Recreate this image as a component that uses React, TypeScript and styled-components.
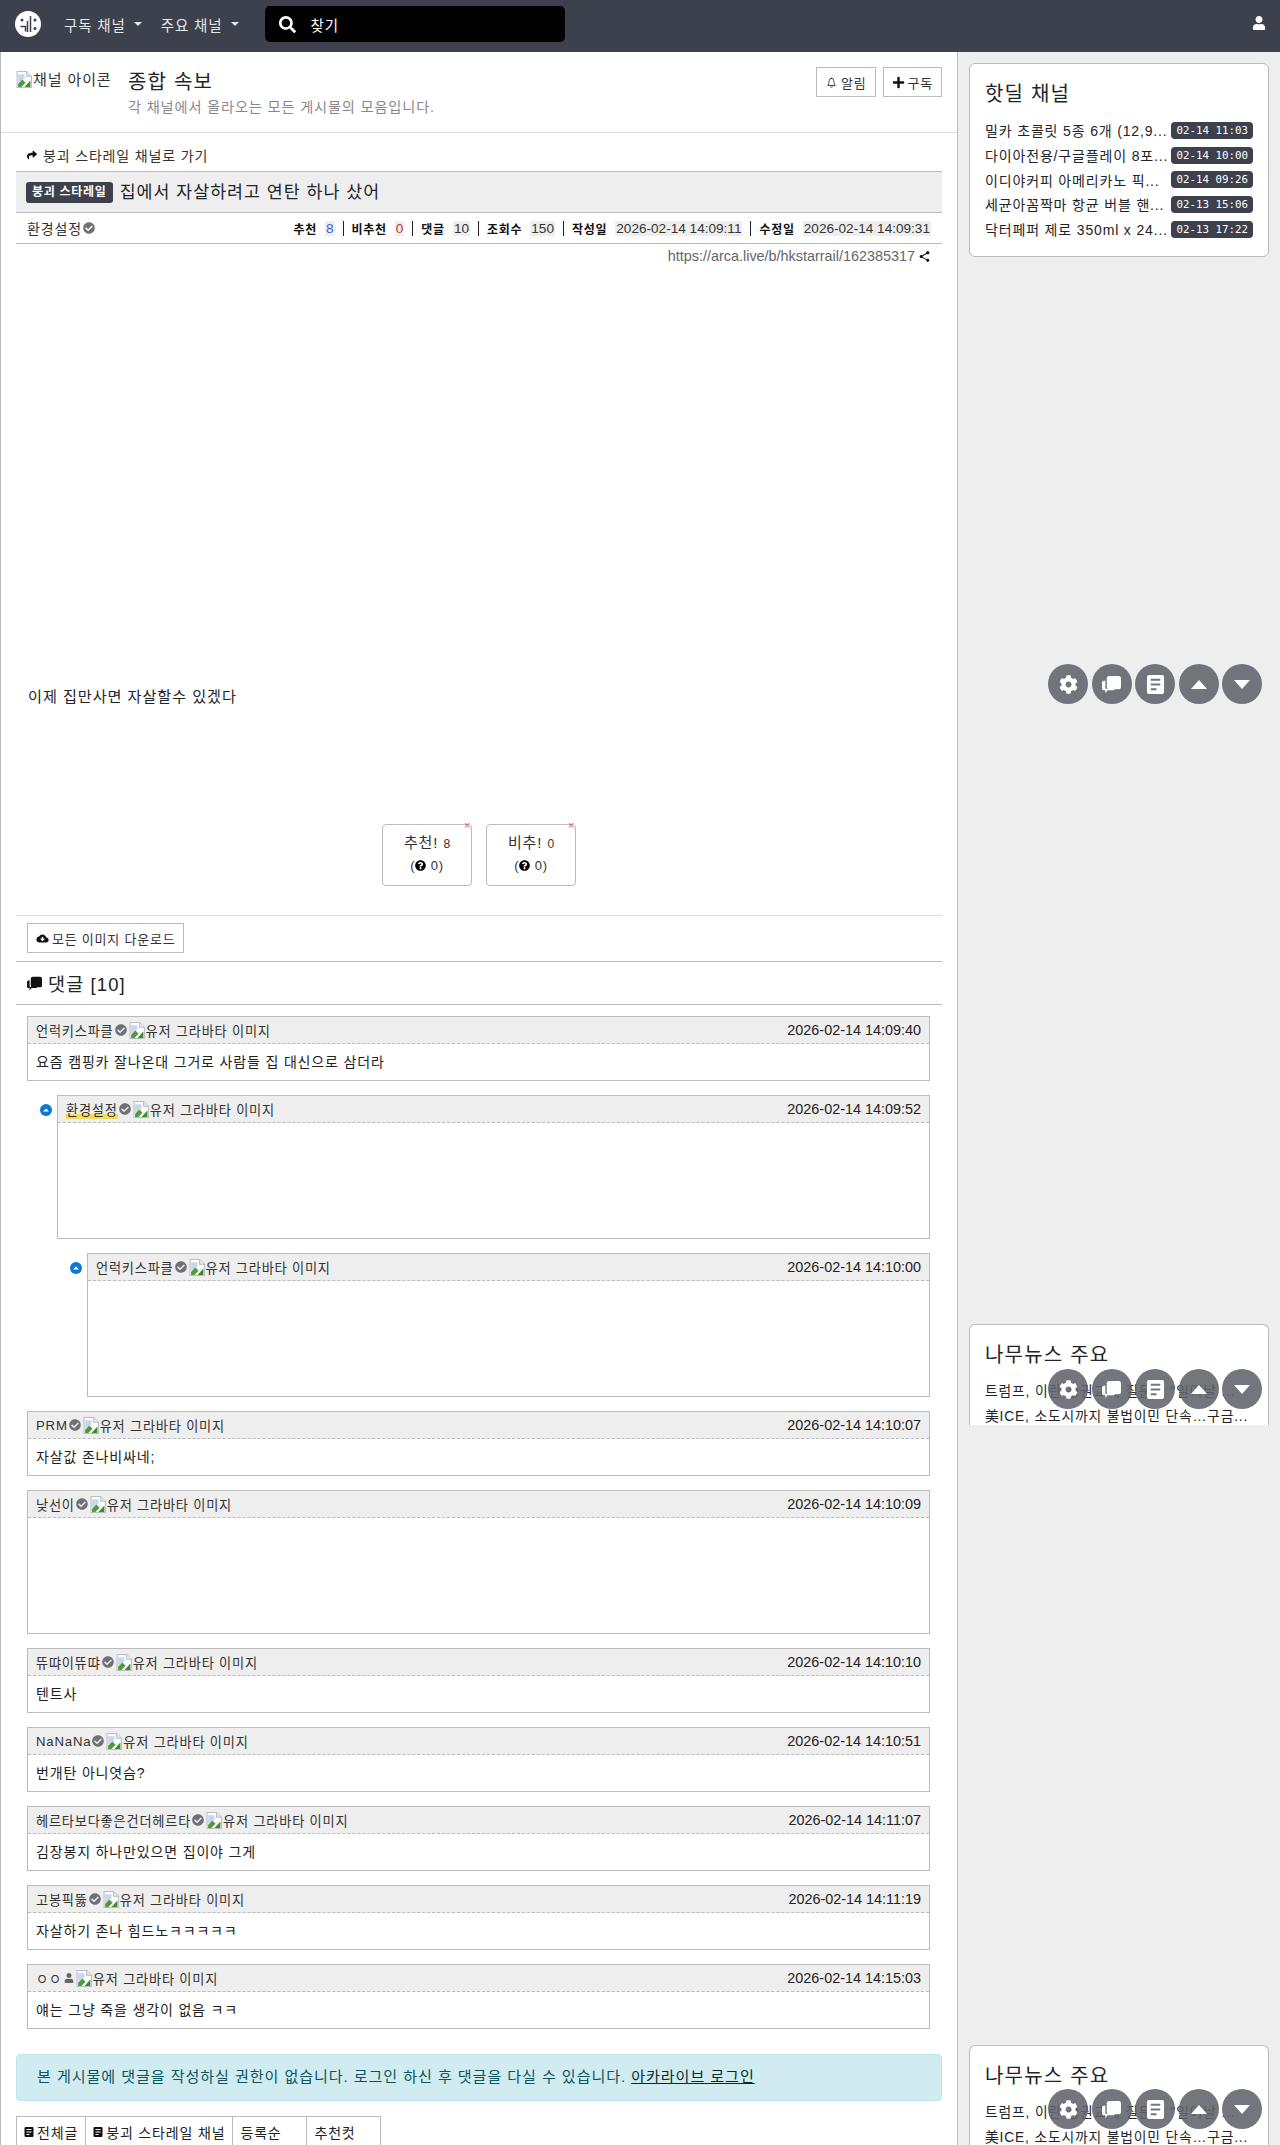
import React from "react";
import styled, { createGlobalStyle } from "styled-components";
import { FaCheckCircle, FaCog, FaPlus, FaQuestionCircle, FaSearch, FaShare, FaUser } from "react-icons/fa";
import { IoIosNotificationsOutline, IoMdCloudDownload, IoMdShare } from "react-icons/io";

const GlobalStyle = createGlobalStyle`
  html, body {
    margin: 0;
    padding: 0;
    height: 2145px;
    overflow: hidden;
    background: #eee;
  }
  body {
    font-family: "Liberation Sans", "Noto Sans CJK KR", sans-serif;
    font-size: 14px;
    color: #212529;
  }
  * {
    box-sizing: border-box;
    letter-spacing: 0.06em;
  }
`;

type CommentData = {
  name: string;
  time: string;
  text?: string;
  depth?: number;
  mine?: boolean;
  anon?: boolean;
};

const comments: CommentData[] = [
  { name: "언럭키스파클", time: "2026-02-14 14:09:40", text: "요즘 캠핑카 잘나온대 그거로 사람들 집 대신으로 삼더라" },
  { name: "환경설정", time: "2026-02-14 14:09:52", depth: 1, mine: true },
  { name: "언럭키스파클", time: "2026-02-14 14:10:00", depth: 2 },
  { name: "PRM", time: "2026-02-14 14:10:07", text: "자살값 존나비싸네;" },
  { name: "낮선이", time: "2026-02-14 14:10:09" },
  { name: "뜌땨이뜌땨", time: "2026-02-14 14:10:10", text: "텐트사" },
  { name: "NaNaNa", time: "2026-02-14 14:10:51", text: "번개탄 아니엿슴?" },
  { name: "헤르타보다좋은건더헤르타", time: "2026-02-14 14:11:07", text: "김장봉지 하나만있으면 집이야 그게" },
  { name: "고봉픽뚫", time: "2026-02-14 14:11:19", text: "자살하기 존나 힘드노ㅋㅋㅋㅋㅋ" },
  { name: "ㅇㅇ", time: "2026-02-14 14:15:03", text: "얘는 그냥 죽을 생각이 없음 ㅋㅋ", anon: true },
];

const hotdeals = [
  ["밀카 초콜릿 5종 6개 (12,9...", "02-14 11:03"],
  ["다이아전용/구글플레이 8포...", "02-14 10:00"],
  ["이디야커피 아메리카노 픽...", "02-14 09:26"],
  ["세균아꼼짝마 항균 버블 핸...", "02-13 15:06"],
  ["닥터페퍼 제로 350ml x 24...", "02-13 17:22"],
];

const stats = [
  { label: "추천", value: "8", tone: "#3d5fd0" },
  { label: "비추천", value: "0", tone: "#c0394b" },
  { label: "댓글", value: "10" },
  { label: "조회수", value: "150" },
  { label: "작성일", value: "2026-02-14 14:09:11" },
  { label: "수정일", value: "2026-02-14 14:09:31" },
];

const BrokenImage = () => (
  <BrokenSvg viewBox="0 0 16 16" aria-hidden="true">
    <path d="M1 .5h9l4.500 4.500v10.500h-13.500z" fill="#fff" stroke="#b8bcc4" />
    <path d="M10 .5v4.500h4.500" fill="#e8eaee" stroke="#b8bcc4" />
    <path d="M2 3h6v4l-6 4z" fill="#c4d8f4" />
    <path d="M2 15v-3l4-4 3 3-4 4z" fill="#4f9a3a" />
    <path d="M8 15l5.500-6v6z" fill="#3f8a2e" />
  </BrokenSvg>
);

const VerifiedMark = () => (
  <Verified>
    <FaCheckCircle />
  </Verified>
);

const Logo = () => (
  <LogoSvg viewBox="0 0 26 26" aria-hidden="true">
    <circle cx="13" cy="13" r="13" fill="#fff" />
    <path d="M12.500 10v11M15.500 5v16M5.500 15.500h5v5" fill="none" stroke="#3d414d" strokeWidth="1.500" />
    <circle cx="7" cy="9" r="1.500" fill="#3d414d" />
    <circle cx="20" cy="9" r="1.500" fill="#3d414d" />
    <circle cx="20" cy="17.500" r="1.500" fill="#3d414d" />
  </LogoSvg>
);

const ChatIcon = () => (
  <svg viewBox="0 0 20 20" width="1em" height="1em" fill="currentColor" aria-hidden="true">
    <rect x="5" y="1" width="15" height="14" rx="2.500" />
    <path d="M3.500 6v8.500h9.500v1.500H6l-2.500 3v-3H2a2 2 0 0 1-2-2V8a2 2 0 0 1 2-2z" />
  </svg>
);

const DocIcon = ({ hole = "#74767f" }: { hole?: string }) => (
  <svg viewBox="0 0 20 20" width="1em" height="1em" aria-hidden="true">
    <rect x="1" y="0" width="18" height="20" rx="2" fill="currentColor" />
    <path d="M5 5h10M5 10h10M5 15h6" stroke={hole} strokeWidth="2" />
  </svg>
);

const FloatingTools = () => (
  <ToolRow>
    <ToolButton><FaCog /></ToolButton>
    <ToolButton><ChatIcon /></ToolButton>
    <ToolButton><DocIcon /></ToolButton>
    <ToolButton><Triangle $up /></ToolButton>
    <ToolButton><Triangle /></ToolButton>
  </ToolRow>
);

const NewsCard = () => (
  <ClippedCard>
    <CardTitle>나무뉴스 주요</CardTitle>
    <NewsLine>트럼프, 이란 정권교체 질문에 "일어날 ...</NewsLine>
    <NewsLine>美ICE, 소도시까지 불법이민 단속…구금...</NewsLine>
  </ClippedCard>
);

const Comment = ({ name, time, text, depth = 0, mine, anon }: CommentData) => (
  <CommentRow $depth={depth}>
    {depth > 0 && (
      <ReplyDot viewBox="0 0 12 12" aria-hidden="true">
        <circle cx="6" cy="6" r="6" fill="#0a78d6" />
        <path d="M3 7.500L6 4.500l3 3z" fill="#fff" />
      </ReplyDot>
    )}
    <CommentBox>
      <CommentHead>
        <Author>
          <AuthorName $mine={mine}>{name}</AuthorName>
          {anon ? <AnonMark><FaUser /></AnonMark> : <VerifiedMark />}
          <BrokenImage />
          유저 그라바타 이미지
        </Author>
        <Stamp>{time}</Stamp>
      </CommentHead>
      {text ? <CommentBody>{text}</CommentBody> : <EmptyBody />}
    </CommentBox>
  </CommentRow>
);

const App = () => (
  <Page>
    <GlobalStyle />
    <TopBar>
      <Logo />
      <NavMenu>구독 채널<Caret /></NavMenu>
      <NavMenu>주요 채널<Caret /></NavMenu>
      <SearchBox>
        <FaSearch />
        <span>찾기</span>
      </SearchBox>
      <UserLink><FaUser /></UserLink>
    </TopBar>
    <Main>
      <Content>
        <ChannelHead>
          <ChannelIcon>
            <BrokenImage />
            채널 아이콘
          </ChannelIcon>
          <ChannelText>
            <ChannelTitle>종합 속보</ChannelTitle>
            <ChannelDesc>각 채널에서 올라오는 모든 게시물의 모음입니다.</ChannelDesc>
          </ChannelText>
          <ChannelActions>
            <OutlineButton><IoIosNotificationsOutline />알림</OutlineButton>
            <OutlineButton><FaPlus />구독</OutlineButton>
          </ChannelActions>
        </ChannelHead>
        <Article>
          <BackLink><FaShare />붕괴 스타레일 채널로 가기</BackLink>
          <TitleRow>
            <Badge>붕괴 스타레일</Badge>
            <ArticleTitle>집에서 자살하려고 연탄 하나 샀어</ArticleTitle>
          </TitleRow>
          <InfoRow>
            <InfoAuthor>환경설정<VerifiedMark /></InfoAuthor>
            <InfoStats>
              {stats.map((s, i) => (
                <React.Fragment key={s.label}>
                  {i > 0 && <InfoSep />}
                  <InfoLabel>{s.label}</InfoLabel>
                  <InfoValue $tone={s.tone}>{s.value}</InfoValue>
                </React.Fragment>
              ))}
            </InfoStats>
          </InfoRow>
          <UrlRow>https://arca.live/b/hkstarrail/162385317<IoMdShare /></UrlRow>
          <ArticleBody>이제 집만사면 자살할수 있겠다</ArticleBody>
          <VoteRow>
            <VoteButton>
              <Dismiss>×</Dismiss>
              <VoteMain>추천! <small>8</small></VoteMain>
              <VoteSub>(<FaQuestionCircle /> 0)</VoteSub>
            </VoteButton>
            <VoteButton>
              <Dismiss>×</Dismiss>
              <VoteMain>비추! <small>0</small></VoteMain>
              <VoteSub>(<FaQuestionCircle /> 0)</VoteSub>
            </VoteButton>
          </VoteRow>
          <DownloadRow>
            <OutlineButton><IoMdCloudDownload />모든 이미지 다운로드</OutlineButton>
          </DownloadRow>
          <CommentsTitle><ChatIcon />댓글 [10]</CommentsTitle>
          <CommentList>
            {comments.map((c) => (
              <Comment key={c.time} {...c} />
            ))}
          </CommentList>
          <LoginAlert>
            본 게시물에 댓글을 작성하실 권한이 없습니다. 로그인 하신 후 댓글을 다실 수 있습니다. <a href="#login">아카라이브 로그인</a>
          </LoginAlert>
          <Tabs>
            <Tab><DocIcon hole="#fff" />전체글</Tab>
            <Tab><DocIcon hole="#fff" />붕괴 스타레일 채널</Tab>
            <Tab $wide>등록순</Tab>
            <Tab $wide>추천컷</Tab>
          </Tabs>
        </Article>
      </Content>
      <Aside>
        <Card>
          <CardTitle>핫딜 채널</CardTitle>
          {hotdeals.map(([title, time]) => (
            <DealRow key={time}>
              <DealTitle>{title}</DealTitle>
              <DealTime>{time}</DealTime>
            </DealRow>
          ))}
        </Card>
        <NewsSlot $top={1272}><NewsCard /></NewsSlot>
        <NewsSlot $top={1993}><NewsCard /></NewsSlot>
      </Aside>
    </Main>
    <FloatSlot $top={664}><FloatingTools /></FloatSlot>
    <FloatSlot $top={1369}><FloatingTools /></FloatSlot>
    <FloatSlot $top={2089}><FloatingTools /></FloatSlot>
  </Page>
);

const Page = styled.div`
  position: relative;
  height: 2145px;
  overflow: hidden;
`;

const TopBar = styled.header`
  display: flex;
  align-items: center;
  height: 52px;
  padding: 0 14px 4px 15px;
  background: #3d414d;
  color: #fff;
`;

const LogoSvg = styled.svg`
  width: 26px;
  height: 26px;
  margin-right: 23px;
`;

const NavMenu = styled.div`
  display: flex;
  align-items: center;
  margin-right: 19px;
  font-size: 14.500px;
  color: #e6e7ea;
`;

const Caret = styled.i`
  margin-left: 8px;
  border-top: 4px solid #e6e7ea;
  border-left: 4px solid transparent;
  border-right: 4px solid transparent;
`;

const SearchBox = styled.div`
  display: flex;
  align-items: center;
  gap: 15px;
  width: 300px;
  height: 36px;
  margin-left: 7px;
  padding: 0 14px;
  border-radius: 5px;
  background: #000;
  font-size: 14.500px;

  svg {
    font-size: 17px;
  }
`;

const UserLink = styled.div`
  margin-left: auto;
  font-size: 14px;
  line-height: 1;
`;

const Main = styled.main`
  display: flex;
  height: 2093px;
`;

const Content = styled.div`
  width: 958px;
  height: 100%;
  overflow: hidden;
  background: #fff;
  border-left: 1px solid #bbb;
  border-right: 1px solid #bbb;
`;

const ChannelHead = styled.section`
  display: flex;
  height: 81px;
  padding: 16px 15px 0 15px;
  border-bottom: 1px solid #ddd;
`;

const BrokenSvg = styled.svg`
  flex: none;
  width: 17px;
  height: 17px;
  vertical-align: -3px;
`;

const ChannelIcon = styled.div`
  width: 96px;
  height: 20px;
  margin-right: 16px;
  overflow: hidden;
  white-space: nowrap;
  font-size: 15px;
  color: #333;
`;

const ChannelText = styled.div`
  flex: 1;
`;

const ChannelTitle = styled.h1`
  margin: 0;
  font-size: 20px;
  font-weight: 400;
  line-height: 28px;
  color: #212529;
`;

const ChannelDesc = styled.p`
  margin: 0;
  font-size: 14.200px;
  color: #888;
`;

const ChannelActions = styled.div`
  display: flex;
  gap: 7px;
  height: 30px;
  margin-top: -1px;
`;

const OutlineButton = styled.div`
  display: inline-flex;
  align-items: center;
  gap: 3px;
  height: 30px;
  padding: 0 8px;
  border: 1px solid #bbb;
  font-size: 13px;
  color: #333;

  svg {
    flex: none;
    color: #111;
  }
`;

const Article = styled.article`
  padding: 0 15px;
`;

const BackLink = styled.div`
  display: flex;
  align-items: center;
  gap: 6px;
  height: 38px;
  padding: 6px 0 0 11px;
  font-size: 14px;
  color: #333;

  svg {
    font-size: 10px;
    color: #111;
  }
`;

const TitleRow = styled.div`
  display: flex;
  align-items: center;
  gap: 7px;
  height: 42px;
  padding: 0 10px;
  background: #eee;
  border-top: 1px solid #bbb;
  border-bottom: 1px solid #bbb;
`;

const Badge = styled.span`
  padding: 4px 6px;
  border-radius: 3px;
  background: #3d414d;
  color: #fff;
  font-size: 12px;
  font-weight: 700;
  line-height: 13px;
`;

const ArticleTitle = styled.h2`
  margin: -4px 0 0;
  font-size: 17.300px;
  font-weight: 400;
`;

const InfoRow = styled.div`
  display: flex;
  align-items: center;
  justify-content: space-between;
  height: 31px;
  padding: 0 11px;
  border-bottom: 1px solid #bbb;
`;

const InfoAuthor = styled.div`
  display: flex;
  align-items: center;
  font-size: 14px;
  color: #333;
`;

const Verified = styled.span`
  display: inline-flex;
  margin: 0 2px 0 1px;
  font-size: 12px;
  color: #6f7176;
`;

const InfoStats = styled.div`
  display: flex;
  align-items: center;
  font-size: 13.600px;
  letter-spacing: 0;
`;

const InfoLabel = styled.b`
  margin-right: 8px;
  font-size: 12px;
  color: #111;
`;

const InfoValue = styled.span<{ $tone?: string }>`
  padding: 0 1px;
  background: #eee;
  color: ${(p) => p.$tone ?? "#333"};
  letter-spacing: 0;
`;

const InfoSep = styled.i`
  width: 1px;
  height: 15px;
  margin: 0 8px;
  background: #222;
`;

const UrlRow = styled.div`
  display: flex;
  align-items: center;
  justify-content: flex-end;
  gap: 3px;
  height: 24px;
  padding-right: 11px;
  font-size: 14.400px;
  letter-spacing: 0;
  color: #666;

  svg {
    font-size: 13px;
    color: #111;
  }
`;

const ArticleBody = styled.p`
  height: 137px;
  margin: 419px 0 0;
  padding-left: 12px;
  font-size: 15.200px;
  line-height: 20px;
`;

const VoteRow = styled.div`
  display: flex;
  justify-content: center;
  gap: 14px;
  height: 92px;
  border-bottom: 1px solid #ddd;
`;

const VoteButton = styled.div`
  position: relative;
  width: 90px;
  height: 62px;
  padding-top: 7px;
  border: 1px solid #bbb;
  border-radius: 4px;
  text-align: center;
  color: #333;
`;

const Dismiss = styled.span`
  position: absolute;
  top: -6px;
  right: 0;
  font-size: 11px;
  line-height: 12px;
  color: #e06060;
`;

const VoteMain = styled.div`
  font-size: 15px;
  line-height: 22px;

  small {
    font-size: 12px;
    letter-spacing: 0;
  }
`;

const VoteSub = styled.div`
  margin-top: 3px;
  font-size: 13px;

  svg {
    font-size: 11px;
    color: #000;
    vertical-align: -1px;
  }
`;

const DownloadRow = styled.div`
  height: 46px;
  padding: 7px 0 0 11px;
  border-bottom: 1px solid #bbb;
`;

const CommentsTitle = styled.h3`
  display: flex;
  align-items: center;
  gap: 6px;
  height: 43px;
  margin: 0;
  padding-left: 11px;
  border-bottom: 1px solid #bbb;
  font-size: 18.500px;
  font-weight: 400;
  color: #222;

  svg {
    font-size: 15px;
    color: #111;
  }
`;

const CommentList = styled.div`
  display: flex;
  flex-direction: column;
  gap: 14px;
  padding: 11px 12px 0 11px;
`;

const CommentRow = styled.div<{ $depth: number }>`
  position: relative;
  margin-left: ${(p) => p.$depth * 30}px;
`;

const ReplyDot = styled.svg`
  position: absolute;
  top: 9px;
  left: -17px;
  width: 12px;
  height: 12px;
`;

const CommentBox = styled.div`
  border: 1px solid #bbb;
`;

const CommentHead = styled.div`
  display: flex;
  align-items: center;
  justify-content: space-between;
  height: 27px;
  padding: 0 8px;
  background: #eee;
  border-bottom: 1px dashed #bbb;
  font-size: 13.200px;
  color: #333;
`;

const Author = styled.div`
  display: flex;
  align-items: center;
  white-space: nowrap;
`;

const AuthorName = styled.span<{ $mine?: boolean }>`
  ${(p) => p.$mine && "background: linear-gradient(transparent 75%, #f2dc5a 75%);"}
`;

const AnonMark = styled.span`
  display: inline-flex;
  margin: 0 2px;
  font-size: 10px;
  color: #666;
`;

const Stamp = styled.span`
  font-size: 14.400px;
  letter-spacing: 0;
  color: #222;
`;

const CommentBody = styled.div`
  height: 36px;
  padding: 0 8px;
  font-size: 14px;
  line-height: 37px;
  color: #222;
`;

const EmptyBody = styled.div`
  height: 115px;
`;

const LoginAlert = styled.div`
  height: 47px;
  margin-top: 25px;
  padding: 0 20px;
  border: 1px solid #bee5eb;
  border-radius: 4px;
  background: #d1ecf1;
  font-size: 15.100px;
  line-height: 44px;
  color: #0c5460;

  a {
    color: #062c33;
  }
`;

const Tabs = styled.nav`
  display: flex;
  margin-top: 15px;
`;

const Tab = styled.div<{ $wide?: boolean }>`
  display: flex;
  align-items: center;
  gap: 3px;
  width: ${(p) => (p.$wide ? "75px" : "auto")};
  height: 30px;
  padding: 0 7px;
  border: 1px solid #bbb;
  border-bottom: 0;
  margin-left: -1px;
  font-size: 14px;
  color: #222;

  &:first-child {
    margin-left: 0;
  }

  svg {
    font-size: 10px;
    color: #111;
  }
`;

const Aside = styled.aside`
  position: relative;
  flex: 1;
  padding: 11px 11px 0 11px;
`;

const Card = styled.section`
  padding: 16px 15px 15px;
  border: 1px solid #bbb;
  border-radius: 6px;
  background: #fff;
  color: #212529;
`;

const CardTitle = styled.h4`
  margin: 0 0 10px;
  font-size: 20px;
  font-weight: 400;
  line-height: 28px;
`;

const DealRow = styled.div`
  display: flex;
  align-items: center;
  justify-content: space-between;
  height: 24.700px;
`;

const DealTitle = styled.span`
  font-size: 14px;
  white-space: nowrap;
`;

const DealTime = styled.span`
  flex: none;
  padding: 2px 5px;
  border-radius: 4px;
  background: #3d414d;
  color: #fff;
  font-family: "DejaVu Sans Mono", monospace;
  font-size: 10.800px;
  letter-spacing: 0;
`;

const NewsSlot = styled.div<{ $top: number }>`
  position: absolute;
  top: ${(p) => p.$top}px;
  left: 11px;
  right: 11px;
`;

const ClippedCard = styled(Card)`
  height: 101px;
  overflow: hidden;
  border-bottom: 0;
  border-radius: 6px 6px 0 0;
  padding-bottom: 0;
`;

const NewsLine = styled.div`
  font-size: 13.800px;
  line-height: 25px;
  white-space: nowrap;
`;

const FloatSlot = styled.div<{ $top: number }>`
  position: absolute;
  top: ${(p) => p.$top}px;
  left: 1048px;
`;

const ToolRow = styled.div`
  display: flex;
  gap: 3.500px;
`;

const ToolButton = styled.div`
  display: flex;
  align-items: center;
  justify-content: center;
  width: 40px;
  height: 40px;
  border-radius: 50%;
  background: rgba(97, 99, 108, 0.88);
  color: #fff;
  font-size: 19px;
`;

const Triangle = styled.i<{ $up?: boolean }>`
  border-left: 8px solid transparent;
  border-right: 8px solid transparent;
  ${(p) => (p.$up ? "border-bottom: 9px solid #fff;" : "border-top: 9px solid #fff;")}
`;

export default App;
